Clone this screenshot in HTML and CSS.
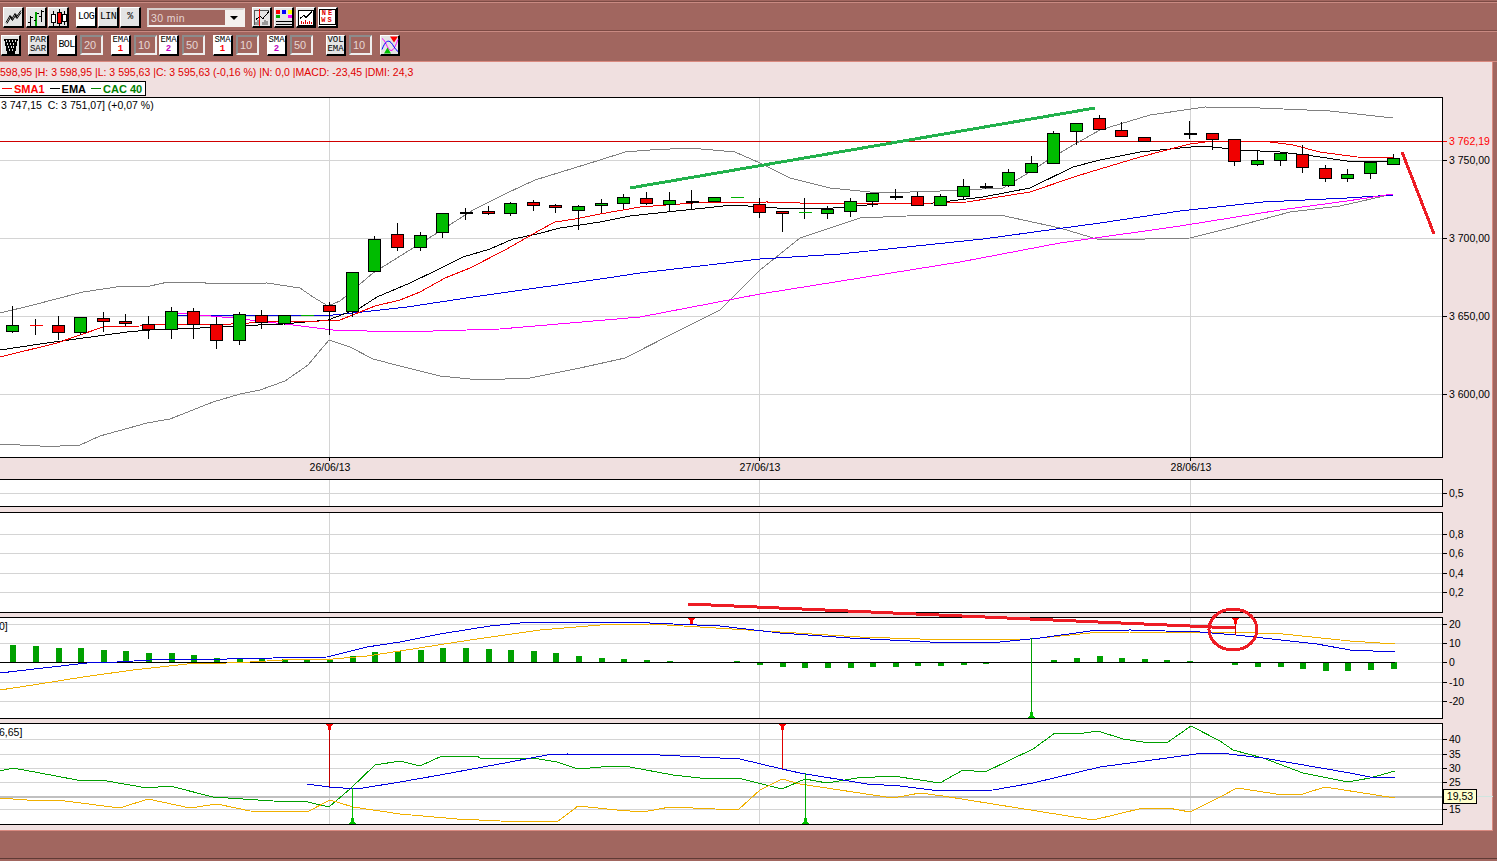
FILE: index.html
```html
<!DOCTYPE html>
<html lang="en">
<head>
    <meta charset="UTF-8">
    <title>CAC 40 - 30 min</title>
    <link rel="stylesheet" href="styles.css">
</head>
<body>

<div class="toolbar">
    <div class="toolbar-row">
        <div class="group group-first">
            <button class="tool">
                <svg viewBox="0 0 21 20"><path d="M3 15L7 8L8.500 12L12 6L13 10L18 3M4 16L8 9L9.500 13L13 7L14 11L18 5" fill="none" stroke="#000" stroke-width="1"/></svg>
            </button>
            <button class="tool">
                <svg viewBox="0 0 21 20" shape-rendering="crispEdges"><path d="M4.500 8V18M2 15H4.500M4.500 10H7M15.500 2V14M13 9H15.500M15.500 4H18" fill="none" stroke="#000"/><path d="M10 4V18" stroke="#00a000" stroke-width="2"/><path d="M8 13H10M11 6H13" stroke="#000"/></svg>
            </button>
            <button class="tool">
                <svg viewBox="0 0 21 20" shape-rendering="crispEdges"><path d="M5.500 3V18M11.500 1V19M16.500 3V17" stroke="#000"/><rect x="3.500" y="6.500" width="4" height="8" fill="#fff" stroke="#000"/><rect x="9.500" y="4.500" width="4" height="11" fill="#f00" stroke="#000"/><rect x="14.500" y="6.500" width="4" height="7" fill="#fff" stroke="#000"/></svg>
            </button>
        </div>
        <div class="group group-scale">
            <button class="tool tool-on">LOG</button>
            <button class="tool">LIN</button>
            <button class="tool">%</button>
        </div>
        <div class="period">
            <span class="period-text">30 min</span>
            <span class="period-arrow"></span>
        </div>
        <div class="group group-views">
            <button class="tool tool-view">
                <svg viewBox="0 0 20 20" shape-rendering="crispEdges"><path d="M2.500 17V2.500H17" fill="none" stroke="#555"/><path d="M4 17V14M6 17V12M11 17V14M13 17V12M15 17V13" stroke="#999" stroke-width="1.500"/><path d="M4 12L8 9L11 11L17 4" fill="none" stroke="#000"/><path d="M7.500 1V18" stroke="#f00" stroke-width="1.500"/></svg>
            </button>
            <button class="tool tool-view">
                <svg viewBox="0 0 20 20" shape-rendering="crispEdges"><rect x="2" y="2" width="4" height="4" fill="#f00"/><rect x="8" y="2" width="4" height="4" fill="#00f"/><rect x="14" y="2" width="4" height="4" fill="#ff0"/><rect x="2" y="7" width="4" height="3" fill="#0a0"/><rect x="14" y="7" width="4" height="3" fill="#f0f"/><path d="M2 13.500H18M2 16.500H18" stroke="#000"/></svg>
            </button>
            <button class="tool tool-view">
                <svg viewBox="0 0 20 20" shape-rendering="crispEdges"><rect x="2.500" y="2.500" width="15" height="15" fill="#fff" stroke="#000"/><path d="M4 11L8 8L10 10L16 4" fill="none" stroke="#000"/><path d="M5 16V13M7 16V14M9 16V12M11 16V14M13 16V13M15 16V14" stroke="#e00000"/></svg>
            </button>
            <button class="tool tool-view tool-news"><span class="news-frame">NE<br>WS</span></button>
        </div>
    </div>
    <div class="toolbar-row toolbar-row-second">
        <button class="tool tool-trash">
            <svg viewBox="0 0 20 20" shape-rendering="crispEdges"><path d="M3 3H17L14 18H6Z" fill="#000"/><path d="M5 5H6M8 5H9M11 5H12M14 5H15M6 8H7M9 8H10M12 8H13M7 11H8M10 11H11M12 11H13M8 14H9M11 14H12" stroke="#ddd" stroke-width="2"/></svg>
        </button>
        <button class="tool tool-two">PAR<br>SAR</button>
        <div class="param">
            <button class="tool tool-on">BOL</button>
            <input class="param-value" type="text" value="20">
        </div>
        <div class="param">
            <button class="tool tool-on tool-two">EMA<br><b class="num-one">1</b></button>
            <input class="param-value" type="text" value="10">
        </div>
        <div class="param param-joined">
            <button class="tool tool-on tool-two">EMA<br><b class="num-two">2</b></button>
            <input class="param-value" type="text" value="50">
        </div>
        <div class="param">
            <button class="tool tool-on tool-two">SMA<br><b class="num-one">1</b></button>
            <input class="param-value" type="text" value="10">
        </div>
        <div class="param">
            <button class="tool tool-on tool-two">SMA<br><b class="num-two">2</b></button>
            <input class="param-value" type="text" value="50">
        </div>
        <div class="param param-apart">
            <button class="tool tool-two">VOL<br>EMA</button>
            <input class="param-value" type="text" value="10">
        </div>
        <button class="tool tool-cross">
            <svg viewBox="0 0 20 20"><path d="M2 3C6 5 7 14 11 15C14 15 16 9 18 4" fill="none" stroke="#f0f"/><path d="M2 14C5 6 8 4 11 7C13 9 15 14 18 16" fill="none" stroke="#00f"/><path d="M10 1H18L14 7Z" fill="#f00"/><path d="M4 18H11L7.500 12Z" fill="#00c000"/></svg>
        </button>
    </div>
</div>

<div class="workspace">
    <div class="info">598,95 |H: 3 598,95 |L: 3 595,63 |C: 3 595,63 (-0,16 %) |N: 0,0 |MACD: -23,45 |DMI: 24,3</div>
    <div class="legend">
        <span class="legend-red">SMA1</span>
        <span class="legend-black">EMA</span>
        <span class="legend-green">CAC 40</span>
    </div>

    <div class="chart-row row-main">
        <div class="plot" id="plot-main"><span class="plot-title">3 747,15&nbsp; C: 3 751,07] (+0,07 %)</span></div>
        <div class="axis" id="axis-main"></div>
    </div>
    <div class="dates">
        <span class="date date-1">26/06/13</span>
        <span class="date date-2">27/06/13</span>
        <span class="date date-3">28/06/13</span>
    </div>
    <div class="chart-row row-vol">
        <div class="plot" id="plot-vol"></div>
        <div class="axis" id="axis-vol"></div>
    </div>
    <div class="chart-row row-sar">
        <div class="plot" id="plot-sar"></div>
        <div class="axis" id="axis-sar"></div>
    </div>
    <div class="chart-row row-macd">
        <div class="plot" id="plot-macd"><span class="plot-title plot-title-cut">0]</span></div>
        <div class="axis" id="axis-macd"></div>
    </div>
    <div class="chart-row row-dmi">
        <div class="plot" id="plot-dmi"><span class="plot-title plot-title-cut">6,65]</span></div>
        <div class="axis" id="axis-dmi">
            <span class="value-tip">19,53</span>
        </div>
    </div>
</div>

<div class="footer"></div>

<!-- lines drawn by hand over the charts -->
<svg class="drawings" viewBox="0 0 1497 861">
    <path d="M630 188L1095 108" stroke="#22b14c"/>
    <path d="M1402 152L1434 234" stroke="#ed1c24"/>
    <path d="M688 604L1235 628" stroke="#ed1c24"/>
    <ellipse cx="1233" cy="629.500" rx="24" ry="20.500" stroke="#ed1c24"/>
</svg>

<script src="chart.js"></script>
</body>
</html>
```

FILE: styles.css
```css
body {
    margin: 0;
    height: 861px;
    overflow: hidden;
    position: relative;
    background-color: #a1665f;
    font-family: "Liberation Sans", Arial, sans-serif;
    font-size: 10.5px;
    color: #000;
}

/* toolbars */
.toolbar {
    height: 60px;
    padding-top: 1px;
    border-bottom: 1px solid #d98a80;
}
.toolbar-row {
    height: 28px;
    display: flex;
    align-items: center;
    padding-left: 3px;
    border-top: 1px solid #7c4a44;
    box-shadow: inset 0 1px 0 #c98a82;
}
.toolbar-row-second {
    padding-left: 1px;
    height: 29px;
    gap: 8px;
}
.group {
    display: flex;
}
.group-first {
    gap: 1.500px;
    margin-top: 3px;
}
.group-scale {
    gap: 1px;
    margin-left: 7px;
    margin-top: 3px;
}
.group-views {
    gap: 2px;
    margin-left: 7px;
    margin-top: 3px;
}
.tool {
    width: 21px;
    height: 21px;
    padding: 0;
    margin: 0;
    flex: none;
    display: block;
    text-align: center;
    box-sizing: border-box;
    background-color: #e4e4e4;
    border-style: solid;
    border-width: 1px 2px 2px 1px;
    border-color: #fff #000 #000 #fff;
    font-family: "Liberation Mono", monospace;
    font-size: 10px;
    line-height: 10px;
    letter-spacing: -.6px;
    color: #000;
}
.tool svg {
    display: block;
    width: calc(100% + 3px);
    height: calc(100% + 3px);
    margin: -1px 0 0 -1px;
}
.tool-on {
    background-color: #fff;
}
.tool-view {
    width: 20px;
}
.tool-two {
    font-size: 9px;
    line-height: 9px;
    letter-spacing: 0;
}
.tool-trash {
    width: 20px;
    margin-right: -1px;
}
.tool-cross {
    width: 20px;
}
.tool-news {
    background-color: #fff;
}
.news-frame {
    display: block;
    height: 16px;
    box-sizing: border-box;
    border: 1px solid #000;
    color: #e00000;
    font-weight: bold;
    font-size: 7px;
    line-height: 7px;
    letter-spacing: 2px;
    text-indent: 1px;
}
.num-one {
    color: #f00;
}
.num-two {
    color: #c000c0;
}
.period {
    width: 98px;
    height: 19px;
    margin-left: 6px;
    margin-top: 3px;
    box-sizing: border-box;
    display: flex;
    align-items: center;
    justify-content: space-between;
    border: 2px solid;
    border-color: #d8cfcd #f4f0ee #f4f0ee #d8cfcd;
    color: #e6d6d4;
    font-size: 10.500px;
    letter-spacing: .4px;
}
.period-text {
    padding-left: 2px;
}
.period-arrow {
    width: 18px;
    height: 15px;
    background-color: #f4f0ee;
    position: relative;
}
.period-arrow::after {
    content: "";
    position: absolute;
    left: 5px;
    top: 6px;
    border: 4px solid transparent;
    border-top: 4px solid #000;
    border-bottom: 0;
}
.param {
    display: flex;
    gap: 3px;
}
.param .tool {
    width: 20px;
}
.param-joined {
    margin-left: -6px;
}
.param-apart {
    margin-left: 5px;
}
.param-value {
    width: 23px;
    height: 20px;
    padding: 0 0 0 2px;
    margin: 0;
    box-sizing: border-box;
    background-color: #a1665f;
    border: 2px solid;
    border-color: #8c8c8c #eee #eee #8c8c8c;
    font-family: "Liberation Sans", Arial, sans-serif;
    font-size: 11px;
    color: #e6d6d4;
    outline: none;
}

/* chart area */
.workspace {
    width: 1493px;
    height: 769px;
    box-sizing: border-box;
    background-color: #f0e0e0;
    border-right: 1px solid #d98a80;
    border-bottom: 1px solid #d98a80;
}
.info {
    height: 19px;
    line-height: 20px;
    color: #e00000;
    white-space: nowrap;
    font-size: 10.5px;
}
.legend {
    display: flex;
    width: 147px;
    gap: 5px;
    height: 15px;
    box-sizing: border-box;
    margin-left: -1px;
    padding: 0 2px;
    align-items: center;
    white-space: nowrap;
    background-color: #fff;
    border: 1px solid #000;
    font-size: 11px;
    font-weight: bold;
}
.legend span::before {
    content: "";
    display: inline-block;
    width: 10px;
    height: 1px;
    margin-right: 2px;
    vertical-align: 4px;
    background-color: currentColor;
}
.legend-red {
    color: #f00;
}
.legend-black {
    color: #000;
}
.legend-green {
    color: #008000;
}
.chart-row {
    display: flex;
}
.row-main {
    height: 361px;
    margin-top: 1px;
}
.row-vol {
    height: 28px;
}
.row-sar {
    height: 101px;
    margin-top: 5px;
}
.row-macd {
    height: 102px;
    margin-top: 4px;
}
.row-dmi {
    height: 102px;
    margin-top: 4px;
}
.plot {
    width: 1443px;
    flex: none;
    box-sizing: border-box;
    position: relative;
    overflow: hidden;
    background-color: #fff;
    border: solid #000;
    border-width: 1px 1px 1px 0;
}
.plot svg {
    display: block;
    width: 1442px;
    height: 100%;
}
.plot-title {
    position: absolute;
    left: 1px;
    top: 1px;
    white-space: nowrap;
}
.plot-title-cut {
    left: -1px;
    top: 2px;
}
.axis {
    flex: 1;
    position: relative;
}
.axis-label {
    position: absolute;
    left: 0;
    display: flex;
    align-items: center;
    height: 12px;
    margin-top: -6px;
    gap: 2px;
    white-space: nowrap;
}
.axis-label::before {
    content: "";
    width: 4px;
    height: 1px;
    background-color: #000;
}
.axis-label-level {
    color: #f00;
}
.axis-label-level::before {
    background-color: #f00;
}
.value-tip {
    position: absolute;
    left: 0;
    top: 66px;
    width: 34px;
    height: 15px;
    box-sizing: border-box;
    text-align: center;
    line-height: 13px;
    background-color: #ffffcc;
    border: 1px solid #000;
    z-index: 1;
}
.value-tip::after {
    content: "";
    position: absolute;
    left: 33px;
    top: 6px;
    width: 16px;
    height: 1px;
    background-color: #cfe6e0;
}
.dates {
    height: 21px;
    position: relative;
}
.date {
    position: absolute;
    top: 3px;
    width: 60px;
    margin-left: -30px;
    text-align: center;
}
.date::before {
    content: "";
    position: absolute;
    left: 29px;
    top: -3px;
    width: 1px;
    height: 3px;
    background-color: #000;
}
.date-1 {
    left: 330px;
}
.date-2 {
    left: 760px;
}
.date-3 {
    left: 1191px;
}
.footer {
    height: 27px;
    border-bottom: 1px solid #5e3a35;
}
.drawings {
    position: absolute;
    left: 0;
    top: 0;
    width: 1497px;
    height: 861px;
    pointer-events: none;
    fill: none;
    stroke-width: 3;
    shape-rendering: crispEdges;
}
```

FILE: chart.js
```js
// candles: [index, bodyTop, bodyBottom, wickTop, wickBottom, colour]
// g/r = filled body, k = black doji, d = thin green doji, e = thin red doji
const candles = [
    [0, 325, 331, 306, 333, 'g'], [1, 325, 325, 319, 335, 'e'], [2, 325, 332, 316, 340, 'r'],
    [3, 317, 332, 317, 335, 'g'], [4, 318, 321, 312, 332, 'r'], [5, 321, 323, 314, 326, 'r'],
    [6, 324, 329, 316, 339, 'r'], [7, 311, 329, 307, 339, 'g'], [8, 311, 324, 308, 339, 'r'],
    [9, 324, 340, 317, 349, 'r'], [10, 314, 340, 312, 345, 'g'], [11, 315, 322, 310, 329, 'r'],
    [12, 315, 323, 315, 325, 'g'], [13, 315, 315, 315, 315, 'd'], [14, 305, 311, 302, 335, 'r'],
    [15, 272, 311, 272, 317, 'g'], [16, 239, 271, 236, 271, 'g'], [17, 234, 247, 223, 251, 'r'],
    [18, 235, 247, 232, 251, 'g'], [19, 213, 232, 213, 238, 'g'], [20, 212, 212, 208, 220, 'k'],
    [21, 211, 213, 206, 215, 'r'], [22, 203, 213, 202, 216, 'g'], [23, 202, 205, 200, 211, 'r'],
    [24, 205, 207, 204, 213, 'r'], [25, 206, 210, 205, 230, 'g'], [26, 203, 205, 199, 213, 'g'],
    [27, 197, 203, 194, 209, 'g'], [28, 198, 203, 192, 205, 'r'], [29, 200, 204, 192, 212, 'g'],
    [30, 201, 201, 190, 209, 'k'], [31, 197, 201, 197, 201, 'g'], [32, 197, 197, 197, 197, 'd'],
    [33, 204, 212, 198, 218, 'r'], [34, 211, 213, 211, 232, 'r'], [35, 212, 212, 198, 219, 'd'],
    [36, 209, 213, 206, 219, 'g'], [37, 201, 211, 198, 217, 'g'], [38, 193, 201, 193, 207, 'g'],
    [39, 196, 196, 189, 200, 'k'], [40, 196, 205, 192, 205, 'r'], [41, 196, 205, 194, 205, 'g'],
    [42, 186, 196, 179, 199, 'g'], [43, 186, 186, 183, 189, 'k'], [44, 172, 185, 169, 187, 'g'],
    [45, 163, 172, 156, 172, 'g'], [46, 133, 163, 131, 163, 'g'], [47, 123, 131, 123, 145, 'g'],
    [48, 118, 129, 115, 129, 'r'], [49, 130, 136, 122, 136, 'r'], [50, 137, 141, 137, 141, 'r'],
    [52, 133, 133, 121, 139, 'k'], [53, 133, 139, 133, 150, 'r'], [54, 139, 161, 139, 166, 'r'],
    [55, 160, 164, 150, 166, 'g'], [56, 153, 160, 153, 166, 'g'], [57, 154, 167, 145, 173, 'r'],
    [58, 168, 178, 165, 182, 'r'], [59, 174, 178, 169, 182, 'g'], [60, 162, 173, 162, 179, 'g'],
    [61, 158, 164, 154, 164, 'g']
];

const bandUp = [[0,313],[33,305],[83,292],[123,286],[150,286],[168,282],[198,282],[213,284],[267,283],[300,288],[313,297],[328,306],[340,301],[373,273],[437,233],[473,210],[507,193],[535,180],[600,160],[625,152],[650,150],[690,148],[735,152],[760,163],[790,178],[830,188],[880,193],[940,191],[1003,188],[1030,172],[1048,160],[1075,144],[1100,130],[1150,115],[1205,107],[1260,108],[1330,111],[1393,118]];
const bandLow = [[0,444],[40,446],[60,446],[80,445],[100,436],[147,423],[170,419],[213,402],[240,394],[260,390],[285,381],[308,365],[329,340],[350,347],[373,359],[400,366],[440,376],[480,380],[530,378],[580,368],[625,358],[680,330],[720,310],[760,270],[800,238],[860,218],[930,215],[1000,215],[1060,228],[1100,240],[1190,238],[1230,228],[1290,212],[1340,206],[1393,194]];
const sma = [[0,357],[57,343],[80,335],[103,327],[140,326],[167,324],[213,325],[267,322],[320,321],[340,320],[375,306],[400,300],[420,292],[445,278],[470,268],[505,250],[540,230],[555,222],[575,219],[600,214],[640,207],[693,203],[767,202],[833,204],[933,203],[967,202],[1030,192],[1077,176],[1100,169],[1140,157],[1190,144],[1213,141],[1263,141],[1293,145],[1320,152],[1357,157],[1393,158]];
const ema = [[0,350],[40,344],[127,332],[150,330],[200,328],[233,326],[283,324],[328,320],[360,308],[377,297],[410,283],[437,270],[463,257],[490,249],[513,239],[537,234],[560,228],[600,222],[630,216],[667,212],[733,205],[777,208],[833,208],[890,203],[933,203],[983,197],[1030,188],[1073,167],[1100,160],[1140,152],[1180,148],[1203,146],[1240,150],[1280,152],[1313,156],[1347,161],[1393,161]];
const ema50 = [[177,315],[333,315],[353,313],[407,307],[473,297],[607,278],[640,273],[700,266],[760,259],[840,254],[983,239],[1100,223],[1180,211],[1263,202],[1347,198],[1393,195]];
const ema200 = [[177,313],[233,318],[293,325],[333,330],[400,332],[500,329],[640,317],[760,294],[960,262],[1060,243],[1180,226],[1280,210],[1347,201],[1393,194]];

const macdBlue = [[0,673],[43,668],[87,663],[117,662],[167,659],[207,659],[227,659],[273,658],[327,657],[367,647],[400,642],[440,634],[490,626],[530,622],[600,622],[650,623],[720,626],[780,633],[850,638],[930,642],[1000,642],[1040,638],[1090,631],[1130,630],[1200,632],[1236,635],[1263,638],[1317,644],[1350,650],[1395,652]];
const macdOrange = [[0,690],[33,685],[83,677],[133,670],[187,664],[227,663],[250,662],[300,659],[333,659],[367,656],[400,651],[470,640],[540,630],[600,625],[650,624],[700,627],[780,632],[860,637],[950,640],[1030,639],[1090,633],[1130,632],[1233,632],[1283,634],[1350,641],[1395,644]];
// top of each histogram bar, baseline at 662
const macdBars = [645,646,648,648,650,651,653,653,655,658,658,659,659,659,659,656,652,651,650,648,648,649,650,651,653,656,658,659,660,661,662,662,661,665,667,668,668,668,667,667,666,666,665,664,663,662,660,658,656,658,659,660,661,662,665,667,667,669,671,671,670,669];

const dmiGreen = [[0,771],[13,768],[40,773],[77,780],[107,781],[147,788],[170,786],[213,797],[273,801],[308,802],[329,807],[350,789],[375,765],[400,761],[420,766],[442,756],[477,756],[480,758],[522,758],[533,758],[557,762],[578,769],[613,766],[630,767],[673,775],[700,778],[738,778],[782,789],[805,779],[827,783],[857,778],[893,776],[940,783],[963,770],[985,772],[1033,749],[1055,733],[1077,734],[1098,731],[1123,739],[1143,742],[1168,742],[1191,726],[1220,741],[1233,750],[1263,758],[1303,773],[1348,782],[1370,778],[1395,771]];
const dmiBlue = [[307,784],[329,787],[357,789],[400,782],[440,775],[510,762],[547,755],[567,754],[660,755],[740,759],[782,769],[800,773],[867,784],[900,786],[940,791],[993,790],[1033,783],[1100,767],[1167,758],[1203,753],[1220,753],[1263,758],[1350,773],[1370,777],[1395,777]];
const dmiOrange = [[0,798],[40,801],[57,800],[120,808],[148,799],[190,808],[217,804],[250,811],[307,812],[330,800],[353,807],[400,814],[457,819],[500,821],[557,822],[578,806],[617,810],[643,812],[670,807],[738,810],[760,790],[782,779],[800,784],[893,798],[920,793],[943,796],[1093,820],[1143,808],[1168,808],[1190,812],[1220,797],[1237,788],[1283,795],[1303,794],[1325,787],[1395,798]];

const VERTICALS = [329, 759, 1190];
const GRID = '#d4d4d4';

function candleX(i) {
    return Math.floor(12.8 + 22.63 * i) + 0.5;
}

function hline(y, color, x1 = 0, x2 = 1442, width = 1) {
    return `<path d="M${x1} ${y + 0.5}H${x2}" stroke="${color}" stroke-width="${width}"/>`;
}

function vline(x, y1, y2, color) {
    return `<path d="M${x + 0.5} ${y1}V${y2}" stroke="${color}"/>`;
}

function line(points, color) {
    return `<polyline points="${points.join(' ')}" fill="none" stroke="${color}"/>`;
}

function arrowDown(x, top) {
    return `<path d="M${x - 3} ${top}h7l-2 3v3h-3v-3z" fill="#f00"/>`;
}

function arrowUp(x, bottom) {
    return `<path d="M${x - 3} ${bottom}h7l-2 -3v-3h-3v3z" fill="#00c000"/>`;
}

function drawCandle(c) {
    const [i, top, bottom, wickTop, wickBottom, kind] = c;
    const x = candleX(i);
    let s = '';
    if (wickTop !== wickBottom) s += `<path d="M${x} ${wickTop}V${wickBottom}" stroke="#000"/>`;
    if (kind === 'g' || kind === 'r') {
        const fill = kind === 'g' ? '#00bb00' : '#f00000';
        s += `<rect x="${x - 6}" y="${top + 0.5}" width="12" height="${bottom - top}" fill="${fill}" stroke="#000"/>`;
    } else {
        const color = kind === 'k' ? '#000' : kind === 'e' ? '#f00' : '#00b000';
        const width = kind === 'k' ? 2 : 1;
        s += `<path d="M${x - 6} ${top + 0.5}h13" stroke="${color}" stroke-width="${width}"/>`;
    }
    return s;
}

function fillPlot(id, top, height, content) {
    const plot = document.getElementById(id);
    const grid = VERTICALS.map(x => vline(x, top, top + height, GRID)).join('');
    plot.insertAdjacentHTML('afterbegin',
        `<svg viewBox="0 ${top + 1} 1442 ${height - 2}" shape-rendering="crispEdges">${grid}${content}</svg>`);
}

function fillAxis(id, top, labels) {
    const axis = document.getElementById(id);
    labels.forEach(([text, y, extra]) => {
        const el = document.createElement('span');
        el.className = 'axis-label' + (extra ? ' ' + extra : '');
        el.style.top = (y - top) + 'px';
        el.textContent = text;
        axis.appendChild(el);
    });
}

// main price chart
fillPlot('plot-main', 97, 361,
    [160, 238, 316, 394].map(y => hline(y, GRID)).join('') +
    hline(141, '#d00000') +
    line(bandUp, '#808080') + line(bandLow, '#808080') +
    line(ema50, '#0000e0') + line(ema200, '#ff00ff') +
    line(ema, '#000') + line(sma, '#f00000') +
    candles.map(drawCandle).join(''));
fillAxis('axis-main', 97, [
    ['3 762,19', 141, 'axis-label-level'], ['3 750,00', 160], ['3 700,00', 238],
    ['3 650,00', 316], ['3 600,00', 394]
]);

fillPlot('plot-vol', 479, 28, hline(493, GRID));
fillAxis('axis-vol', 479, [['0,5', 493]]);

fillPlot('plot-sar', 512, 101, [534, 553, 573, 592].map(y => hline(y, GRID)).join(''));
fillAxis('axis-sar', 512, [['0,8', 534], ['0,6', 553], ['0,4', 573], ['0,2', 592]]);

// macd
const bars = macdBars.map((barTop, i) => {
    if (barTop === 662) return '';
    const x = candleX(i) - 2.5;
    const y = Math.min(barTop, 662);
    return `<rect x="${x}" y="${y}" width="6" height="${Math.abs(662 - barTop)}" fill="#00a000"/>`;
}).join('');
fillPlot('plot-macd', 617, 102,
    [624, 643, 682, 701].map(y => hline(y, GRID)).join('') +
    hline(662, GRID, 1395) + bars + hline(662, '#000', 0, 1395) +
    line(macdOrange, '#f0b000') + line(macdBlue, '#0000e0') +
    arrowDown(691, 618) + arrowDown(1235, 618) + vline(1235, 624, 635, '#d00000') +
    vline(1031, 638, 718, '#00a000') + arrowUp(1031, 718));
fillAxis('axis-macd', 617, [['20', 624], ['10', 643], ['0', 662], ['-10', 682], ['-20', 701]]);

// dmi
fillPlot('plot-dmi', 723, 102,
    [739, 754, 768, 782, 809].map(y => hline(y, GRID)).join('') +
    hline(796, '#c0c0c0', 0, 1442, 2) +
    line(dmiGreen, '#00a000') + line(dmiOrange, '#f0b000') + line(dmiBlue, '#0000e0') +
    vline(329, 724, 787, '#c00000') + arrowDown(329, 724) +
    vline(782, 724, 769, '#e00000') + arrowDown(782, 724) +
    vline(352, 788, 824, '#00c000') + arrowUp(352, 824) +
    vline(805, 773, 824, '#00b000') + arrowUp(805, 824));
fillAxis('axis-dmi', 723, [['40', 739], ['35', 754], ['30', 768], ['25', 782], ['15', 809]]);
```
